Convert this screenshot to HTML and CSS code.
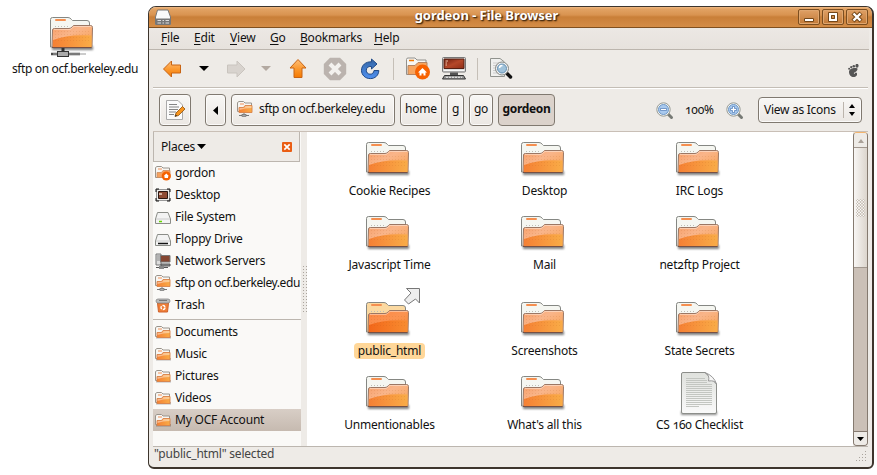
FILE: index.html
```html
<!DOCTYPE html>
<html lang="en">
<head>
<meta charset="utf-8">
<title>gordeon - File Browser</title>
<link rel="stylesheet" href="styles.css">
</head>
<body>
<svg class="defs" width="0" height="0">
  <defs>
    <linearGradient id="front" x1="0" y1="0" x2="1" y2="1"><stop offset="0" stop-color="#f79c64"/><stop offset=".4" stop-color="#f9b58a"/><stop offset="1" stop-color="#f9a04e"/></linearGradient>
    <linearGradient id="frontSel" x1="0" y1="0" x2="1" y2="1"><stop offset="0" stop-color="#fb8643"/><stop offset=".5" stop-color="#fb9351"/><stop offset="1" stop-color="#f88a35"/></linearGradient>
    <linearGradient id="low" x1="0" y1="0" x2="1" y2="0"><stop offset="0" stop-color="#f58034"/><stop offset="1" stop-color="#f9ac47"/></linearGradient>
    <linearGradient id="lowSel" x1="0" y1="0" x2="1" y2="0"><stop offset="0" stop-color="#f2671a"/><stop offset="1" stop-color="#f88c30"/></linearGradient>
    <linearGradient id="orange" x1="0" y1="0" x2="0" y2="1"><stop offset="0" stop-color="#ffbe78"/><stop offset=".5" stop-color="#fb9a32"/><stop offset="1" stop-color="#f57900"/></linearGradient>
    <linearGradient id="blue" x1="0" y1="0" x2="0" y2="1"><stop offset="0" stop-color="#3465a4"/><stop offset="1" stop-color="#4f90f0"/></linearGradient>
    <linearGradient id="screen" x1="0" y1="0" x2="1" y2="1"><stop offset="0" stop-color="#6e1c0e"/><stop offset=".5" stop-color="#b5482a"/><stop offset="1" stop-color="#8f2d16"/></linearGradient>
    <linearGradient id="paper" x1="0" y1="0" x2="0" y2="1"><stop offset="0" stop-color="#dfe1dd"/><stop offset="1" stop-color="#fafafa"/></linearGradient>
    <filter id="soft" x="-20%" y="-100%" width="140%" height="300%"><feGaussianBlur stdDeviation="1.1"/></filter>
    <pattern id="dots" width="3" height="3" patternUnits="userSpaceOnUse"><rect x="1" y="1" width="1" height="1" fill="#a04a10" fill-opacity=".13"/></pattern>
  </defs>
  <symbol id="folder" viewBox="0 0 48 38">
    <rect x="4" y="31" width="41" height="4" fill="#000" opacity=".5" filter="url(#soft)"/>
    <path class="back" d="M2.500 32V4.500Q2.500 2.500 4.500 2.500H20Q22 2.500 23.500 4.500L24.500 5.500H39Q41.500 5.500 41.500 8V32Z" stroke="#858783"/>
    <rect x="7" y="4" width="11" height="2" rx="1" fill="#f58f50"/>
    <path d="M7 11.500H22" stroke="#bdbdb6" stroke-dasharray="1 2"/>
    <path class="front" d="M4.500 15Q4.500 13.500 6.500 13.500H21Q23 13.500 24.500 11.500L25.500 10.500H42.500Q44.500 10.500 44.500 12.500L44 31Q44 32.500 42.500 32.500H5.500Q4 32.500 4 31Z" stroke="#9b7764"/>
    <path class="low" d="M5 25Q20 19 43.500 20.500V32H5Z"/>
    <rect x="7" y="15" width="35" height="13" fill="url(#dots)"/>
    <path d="M5.500 15Q5.500 14.500 7 14.500H22L26 11.500H43.500" fill="none" stroke="#fff" stroke-opacity=".4"/>
    <path d="M4 32.500H43.500" stroke="#775044"/>
  </symbol>
  <symbol id="mini" viewBox="0 0 16 16">
    <rect x="1" y="12" width="15" height="2.500" fill="#000" opacity=".25"/>
    <path d="M.5 12.500V3.500L2 2.500H6.500L8 4H14.500V12.500Z" fill="#f8f6f2" stroke="#9a948c"/>
    <path d="M3 5H7" stroke="#f3925a"/>
    <path d="M2 13.500V8.500H6.500L8 6.500H15V13.500Z" fill="url(#low)" stroke="#d98248" stroke-width=".9"/>
    <path d="M2.500 9H7L8.500 7H14.500V9Q8 9 2.500 11Z" fill="#fff" opacity=".42"/>
  </symbol>
  <symbol id="mininet" viewBox="0 0 16 16">
    <path d="M.5 10.500V1.500L2 .5H6.500L8 2H14.500V10.500Z" fill="#f8f6f2" stroke="#9a948c"/>
    <path d="M3 3H7" stroke="#f3925a"/>
    <path d="M2 11.500V6.500H6.500L8 4.500H15V11.500Z" fill="url(#low)" stroke="#d98248" stroke-width=".9"/>
    <path d="M2.500 7H7L8.500 5H14.500V7Q8 7 2.500 9Z" fill="#fff" opacity=".42"/>
    <path d="M2 14.500H12M7 12V14" stroke="#777"/><rect x="5" y="13.300" width="4" height="2.200" fill="#aaa" stroke="#666" stroke-width=".6"/>
  </symbol>
  <symbol id="home" viewBox="0 0 16 16">
    <path d="M.5 12.500V2.500L2 1.500H6.500L8 3H14.500V12.500Z" fill="#f8f6f2" stroke="#9a948c"/>
    <path d="M3 4H7" stroke="#f3925a"/>
    <path d="M2 12.500V7.500H6.500L8 5.500H15V12.500Z" fill="#f6a25e" stroke="#c98c60" stroke-width=".8"/>
    <circle cx="11.300" cy="11" r="4.600" fill="#f56200"/>
    <path d="M8.600 11.200L11.300 8.500L14 11.200H13V13H9.600V11.200Z" fill="#fff"/>
  </symbol>
  <symbol id="drive" viewBox="0 0 16 16">
    <path d="M2.500 3.500H13L15.500 10V14.500H.5V10Z" fill="#f3f3f3" stroke="#8b8d88"/>
    <path d="M1 10H15" stroke="#ccc"/>
  </symbol>
  <symbol id="close" viewBox="0 0 10 10">
    <rect width="10" height="10" rx="1" fill="#ea5d13"/><path d="M2.300 2.300L7.700 7.700M7.700 2.300L2.300 7.700" stroke="#fff" stroke-width="1.700"/>
  </symbol>
  <symbol id="lens" viewBox="0 0 18 18">
    <path d="M12 12L15.500 15.500" stroke="#777a75" stroke-width="3" stroke-linecap="round"/>
    <circle cx="7.500" cy="7.500" r="6.700" fill="#f3f4f2" stroke="#969a94"/>
    <circle cx="7.500" cy="7.500" r="5" fill="#a9c9ee" stroke="#6e98c8"/>
  </symbol>
</svg>

<main class="desktop">
  <figure class="launcher">
    <svg class="launcher-icon" viewBox="0 0 48 45"><use href="#folder" width="48" height="38"/><path d="M3 39H14M20 39H32" stroke="#4b4b4b" stroke-width="2.500"/><path d="M5 39H14M20 39H32" stroke="#aaa"/><path d="M32 39H38" stroke="#ccc" stroke-width="2"/><path d="M15 33V36" stroke="#333" stroke-width="3"/><rect x="9.500" y="36.500" width="11" height="5" fill="#aaa" stroke="#333"/></svg>
    <figcaption>sftp on ocf.berkeley.edu</figcaption>
  </figure>

  <section class="window">
    <header class="titlebar">
      <svg class="app-icon" width="16" height="16" viewBox="0 0 16 16"><path d="M2.500 1H13L15.500 8V15.500H.5V8Z" fill="#fafafa" stroke="#777"/><path d="M1 9.500H15V15H1Z" fill="#777"/><path d="M2.500 11.500H6M2.500 14H6M7.500 11.500H9M7.500 14H9M10.500 11.500H14M10.500 14H14" stroke="#ddd" stroke-width="1.200"/></svg>
      <h1>gordeon - File Browser</h1>
      <div class="controls">
        <i><svg viewBox="0 0 20 14"><path d="M5.500 8.500H14.500V11.500H5.500Z" fill="#fff" stroke="#744719"/></svg></i>
        <i><svg viewBox="0 0 20 14"><path d="M5.500 2.500H14.500V11.500H5.500Z" fill="none" stroke="#744719"/><path d="M7 4H13V10H7Z" fill="none" stroke="#fff" stroke-width="2"/><path d="M8.500 5.500H11.500V8.500H8.500Z" fill="none" stroke="#744719"/></svg></i>
        <i><svg viewBox="0 0 20 14"><path d="M6 3L14 11M14 3L6 11" stroke="#744719" stroke-width="4.500"/><path d="M6.500 3.500L13.500 10.500M13.500 3.500L6.500 10.500" stroke="#fff" stroke-width="2.400"/></svg></i>
      </div>
    </header>

    <nav class="menu">
      <span class="m1"><u>F</u>ile</span><span class="m2"><u>E</u>dit</span><span class="m3"><u>V</u>iew</span><span class="m4"><u>G</u>o</span><span class="m5"><u>B</u>ookmarks</span><span class="m6"><u>H</u>elp</span>
    </nav>

    <div class="toolbar">
      <svg class="t-back" width="22" height="20" viewBox="0 0 22 20"><path d="M2.500 10L10.500 2V6H19.500V14H10.500V18Z" fill="url(#orange)" stroke="#c86414" stroke-linejoin="round"/></svg>
      <svg class="t-drop" width="10" height="5" viewBox="0 0 10 5"><path d="M0 0H10L5 5Z" fill="#000"/></svg>
      <svg class="t-fwd" width="22" height="20" viewBox="0 0 22 20"><path d="M19 10L11 2V6H1.500V14H11V18Z" fill="#d8d3ce" stroke="#c9c4be" stroke-linejoin="round"/></svg>
      <svg class="t-drop2" width="10" height="5" viewBox="0 0 10 5"><path d="M0 0H10L5 5Z" fill="#b3a9a1"/></svg>
      <svg class="t-up" width="20" height="22" viewBox="0 0 20 22"><path d="M10 1.500L18 10H14V19.500H6V10H2Z" fill="url(#orange)" stroke="#c86414" stroke-linejoin="round"/></svg>
      <svg class="t-stop" width="24" height="24" viewBox="0 0 24 24"><path d="M7 .8H17L23.200 7V17L17 23.200H7L.8 17V7Z" fill="#bbb3ae"/><path d="M7 7L17 17M17 7L7 17" stroke="#f3f1ee" stroke-width="4"/></svg>
      <svg class="t-reload" width="20" height="22" viewBox="0 0 20 22"><path d="M11.500 1L17 6L11.500 11V8.500C8 8 6.300 10 6.300 12.300C6.300 14.600 8 16.200 10 16.200C12.500 16.200 13.800 14.700 14 12.500H18.800C18.700 17.500 15 20.600 10.300 20.600C5.200 20.600 1.500 17 1.500 12.300C1.500 7.300 5.500 3.600 11.500 3.800Z" fill="url(#blue)" stroke="#204a87" stroke-linejoin="round"/></svg>
      <b class="sep s1"></b>
      <svg class="t-home" width="24" height="23" viewBox="0 0 24 23"><path d="M.5 17.500V2.500Q.5 1 2 1H9L11 3H20V17.500Z" fill="#f7f7f4" stroke="#92908c"/><path d="M3 3.500H8" stroke="#f57900" stroke-width="1.500"/><path d="M2 17.500V8.500H9L12 5.500H21V17.500Z" fill="#f6a45f" stroke="#b38463"/><circle cx="16.500" cy="15" r="7.500" fill="#f76100"/><path d="M12 15.500L16.500 11L21 15.500H19.500V18.500H17.500V16.500H15.500V18.500H13.500V15.500Z" fill="#fff"/></svg>
      <svg class="t-pc" width="24" height="23" viewBox="0 0 24 23"><rect x=".5" y=".5" width="23" height="14.500" rx="1" fill="#ddd" stroke="#777"/><path d="M2 2H22V11.500H2Z" fill="url(#screen)" stroke="#552013"/><path d="M3.500 4H6M3.500 6H5M3.500 8H5" stroke="#efc4a9"/><path d="M2 13.500H22" stroke="#f8f8f8"/><path d="M8 15.500H16V18H8Z" fill="#555"/><path d="M2.500 18.500H21.500L23.500 22H.5Z" fill="#999" stroke="#333"/><path d="M4 20.300H20" stroke="#eee" stroke-dasharray="2 1"/></svg>
      <b class="sep s2"></b>
      <svg class="t-find" width="24" height="23" viewBox="0 0 24 23"><path d="M.5 1.500H10L14.500 5V19.500H.5Z" fill="#f0f0ee" stroke="#90928d"/><path d="M3 6H9M3 8.500H7M3 11H6M3 13.500H6M3 16H9" stroke="#ccc"/><path d="M17 16.500L20.500 20" stroke="#111" stroke-width="3.500" stroke-linecap="round"/><circle cx="12" cy="11.500" r="6.500" fill="#f1f1f1" stroke="#858884"/><circle cx="12" cy="11.500" r="4.500" fill="#a0c2da" stroke="#6590b2"/><path d="M9.500 11Q9.500 8.500 12.500 8.500" fill="none" stroke="#fff" stroke-width="1.500"/></svg>
      <svg class="t-gnome" width="11" height="13" viewBox="0 0 11 13"><g fill="#555"><path d="M9.500 4.500C6.500 3.500 1 4.300 1 8C1 11 3.300 13 5.500 13C8.200 13 9.800 11 8.800 9C8.200 8 7 8.500 7 9.300C6.700 10.200 5.600 10 6 9C6.500 8 9.800 7.500 9.500 4.500Z"/><ellipse cx="9" cy="1.800" rx="1.600" ry="2"/><circle cx="5.800" cy="2.200" r="1.300"/><circle cx="3.200" cy="3.200" r="1.100"/><circle cx="1.100" cy="4.700" r="1"/></g></svg>
    </div>

    <div class="location">
      <div class="btn b-edit"><svg width="20" height="22" viewBox="0 0 20 22"><path d="M1.500 1.500H13L17.500 6V20.500H1.500Z" fill="#fbfbfb" stroke="#aaa"/><path d="M4 5.500H12M4 8H14M4 10.500H13M4 13H11M4 15.500H9" stroke="#858585"/><path d="M10 17.500L11 14L17.500 7.500L20 10L13.500 16.500Z" fill="#f7941d" stroke="#8c5210" stroke-width=".8"/><path d="M10 17.500L10.600 15.400L12.200 16.800Z" fill="#333"/></svg></div>
      <div class="btn b-prev"><svg width="5" height="9" viewBox="0 0 5 9"><path d="M5 0V9L0 4.500Z"/></svg></div>
      <div class="btn b-sftp"><svg width="16" height="16"><use href="#mininet"/></svg><span>sftp on ocf.berkeley.edu</span></div>
      <div class="btn b-home">home</div>
      <div class="btn b-g">g</div>
      <div class="btn b-go">go</div>
      <div class="btn b-cur">gordeon</div>
      <div class="zoom">
        <svg width="18" height="18" viewBox="0 0 18 18"><use href="#lens"/><path d="M4.500 6.500H10.500V8.500H4.500Z" fill="#fff" stroke="#4c79b4" stroke-width=".7"/></svg>
        <span>100%</span>
        <svg width="18" height="18" viewBox="0 0 18 18"><use href="#lens"/><path d="M6.500 4.500H8.500V6.500H10.500V8.500H8.500V10.500H6.500V8.500H4.500V6.500H6.500Z" fill="#fff" stroke="#4c79b4" stroke-width=".7"/></svg>
      </div>
      <div class="btn view"><span>View as Icons</span><svg width="6" height="12" viewBox="0 0 6 12"><path d="M3 0L6 4H0ZM3 12L0 8H6Z"/></svg></div>
    </div>

    <div class="body">
      <aside class="side">
        <div class="side-head"><span>Places</span><svg width="9" height="5" viewBox="0 0 9 5"><path d="M0 0H9L4.500 5Z"/></svg><svg class="x" width="10" height="10"><use href="#close"/></svg></div>
        <ul>
          <li><svg><use href="#home"/></svg>gordon</li>
          <li><svg viewBox="0 0 16 16"><path d="M1.500 2.500H14.500V13.500H1.500Z" fill="#eee" stroke="#999"/><path d="M1 5V2H4M12 2H15V5M15 11V14H12M4 14H1V11" fill="none" stroke="#111"/><path d="M3.500 4.500H12.500V11.500H3.500Z" fill="#8f4b34" stroke="#2c1712"/><path d="M4 6H7V8H4Z" fill="#d5b3a2"/></svg>Desktop</li>
          <li><svg viewBox="0 0 16 16"><use href="#drive"/><path d="M4 12.500H7" stroke="#65d800" stroke-width="1.500"/></svg>File System</li>
          <li><svg viewBox="0 0 16 16"><use href="#drive"/><path d="M3 12.500H13" stroke="#111" stroke-width="1.500"/></svg>Floppy Drive</li>
          <li><svg viewBox="0 0 16 16"><path d="M1 1H6V12H1Z" fill="#ddd" stroke="#777"/><path d="M2 3H5M2 5H5M2 7H5" stroke="#888"/><path d="M5.500 2.500H15V9H5.500Z" fill="#854631" stroke="#777"/><path d="M6 11H15V13H6Z" fill="#999" stroke="#555"/><path d="M1 14.500H13" stroke="#555"/><path d="M4 13H9V16H4Z" fill="#888"/></svg>Network Servers</li>
          <li class="tight"><svg><use href="#mininet"/></svg>sftp on ocf.berkeley.edu</li>
          <li><svg viewBox="0 0 16 16"><path d="M2.500 6H13.500L12.500 15H3.500Z" fill="#ef7e37" stroke="#d0622c"/><rect x="1" y="2" width="14" height="4" rx="2" fill="#bbb" stroke="#888" stroke-width=".8"/><path d="M4 3.500H12" stroke="#777"/><circle cx="8" cy="10.500" r="2" fill="none" stroke="#fff" stroke-width="1.300" stroke-dasharray="3 1"/></svg>Trash</li>
        </ul>
        <hr>
        <ul>
          <li><svg><use href="#mini"/></svg>Documents</li>
          <li><svg><use href="#mini"/></svg>Music</li>
          <li><svg><use href="#mini"/></svg>Pictures</li>
          <li><svg><use href="#mini"/></svg>Videos</li>
          <li class="on"><svg><use href="#mini"/></svg>My OCF Account</li>
        </ul>
      </aside>
      <div class="grip"><i></i></div>
      <div class="files">
        <div class="file"><svg><use href="#folder"/></svg><span>Cookie Recipes</span></div>
        <div class="file"><svg><use href="#folder"/></svg><span>Desktop</span></div>
        <div class="file"><svg><use href="#folder"/></svg><span>IRC Logs</span></div>
        <div class="file"><svg><use href="#folder"/></svg><span>Javascript Time</span></div>
        <div class="file"><svg><use href="#folder"/></svg><span>Mail</span></div>
        <div class="file"><svg><use href="#folder"/></svg><span>net2ftp Project</span></div>
        <div class="file sel"><svg><use href="#folder"/></svg><span>public_html</span><svg class="emblem" viewBox="0 0 18 18"><path d="M3.500 1.500H16.500V16L12.500 12L5.500 17L1.500 13L8 6Z" fill="#eee" stroke="#777"/></svg></div>
        <div class="file"><svg><use href="#folder"/></svg><span>Screenshots</span></div>
        <div class="file"><svg><use href="#folder"/></svg><span>State Secrets</span></div>
        <div class="file"><svg><use href="#folder"/></svg><span>Unmentionables</span></div>
        <div class="file"><svg><use href="#folder"/></svg><span>What's all this</span></div>
        <div class="file doc"><svg viewBox="0 0 40 46"><rect x="2" y="40" width="36" height="4" fill="#000" opacity=".45" filter="url(#soft)"/><path d="M4 1.500H26L37.500 13V41Q37.500 42.500 36 42.500H4Q2.500 42.500 2.500 41V3Q2.500 1.500 4 1.500Z" fill="url(#paper)" stroke="#8c8e8a"/><path d="M7 7.500H26M7 9.500H28M7 11.500H28M7 13.500H33M7 15.500H33M7 17.500H33M7 19.500H33M7 21.500H33M7 23.500H33M7 25.500H33M7 27.500H33M7 29.500H33M7 31.500H33M7 33.500H33M7 35.500H20" stroke="#c3c6c1"/><path d="M26 1.500Q31 4 29.500 10Q36 9 37.500 13Q35 5 26 1.500Z" fill="#f7f7f7" stroke="#999"/></svg><span>CS 160 Checklist</span></div>
      </div>
      <div class="scroll">
        <div class="sb up"><svg width="6" height="4" viewBox="0 0 6 4"><path d="M3 0L6 4H0Z" fill="#aaa198"/></svg></div>
        <div class="thumb"><i></i></div>
        <div class="trough"></div>
        <div class="sb"><svg width="7" height="4" viewBox="0 0 7 4"><path d="M0 0H7L3.500 4Z"/></svg></div>
      </div>
    </div>
    <footer class="status"><span>"public_html" selected</span><svg width="11" height="11" viewBox="0 0 11 11"><path d="M9.500 0V11M6.500 3V11M3.500 6V11M.5 9V11" stroke="#aaa49d" stroke-dasharray="1 2"/></svg></footer>
  </section>
</main>
</body>
</html>
```
FILE: styles.css
```css
* { box-sizing: border-box; }
body { margin: 0; background: #fff; color: #111; font: 12px/16px "Noto Sans", sans-serif; font-variant-numeric: oldstyle-nums; letter-spacing: -0.2px; overflow: hidden; }
.defs { position: absolute; }
svg { display: block; flex: none; }
.desktop { display: flex; width: 877px; height: 475px; }
.launcher { margin: 15px 0 0; width: 148px; display: flex; flex-direction: column; align-items: center; flex: none; white-space: nowrap; }
.launcher-icon { width: 48px; height: 45px; margin: 0 0 1px -4px; }
.launcher figcaption { padding-left: 2px; letter-spacing: -0.37px; }
.window { margin-top: 6px; width: 726px; height: 463px; border: 1px solid #3d352d; border-bottom-width: 2px; border-right-width: 2px; border-radius: 8px 8px 6px 6px; background: #eeebe7; overflow: hidden; display: flex; flex-direction: column; flex: none; }
.titlebar { height: 21px; flex: none; display: flex; align-items: center; background: linear-gradient(#efb983 0, #e2a263 2px, #d99350 8px, #c97f38 10px, #d48d47 20px); border-bottom: 1px solid #80501f; padding: 0 4px 0 6px; }
.titlebar h1 { flex: 1; margin: 0 0 3px 4px; text-align: center; font-size: 13px; line-height: 17px; letter-spacing: -0.05px; color: #fff; text-shadow: 1px 1px 1px #4a2d10, 1px 1px 2px #4a2d10; }
.controls { display: flex; gap: 2px; }
.controls i { width: 22px; height: 16px; border: 1px solid #7c4e20; border-radius: 2px; background: linear-gradient(#dfa066, #c27a37); box-shadow: inset 0 0 0 1px #dfa66f; }
.controls svg { width: 20px; height: 14px; }
.menu { height: 22px; flex: none; display: flex; align-items: center; padding: 0 0 2px 12px; margin: 0 3px 0 0; background: linear-gradient(#ece8e4, #e7e2dd); border-bottom: 1px solid #bcb5ad; }
.menu u { text-underline-offset: 2px; }
.m1 { width: 33px; } .m2 { width: 36px; } .m3 { width: 40px; } .m4 { width: 30px; } .m5 { width: 74px; }
.toolbar { height: 38px; flex: none; display: flex; align-items: center; margin: 0 4px; border-bottom: 1px solid #c3bdb5; box-shadow: 0 1px #fff; padding: 0 9px 0 8px; }
.t-drop { margin-left: 16px; } .t-fwd { margin-left: 17px; } .t-drop2 { margin-left: 13px; } .t-up { margin-left: 17px; } .t-stop { margin-left: 15px; } .t-reload { margin-left: 13px; }
.sep { width: 1px; height: 22px; background: #c5bfb7; flex: none; }
.s1 { margin-left: 13px; } .t-home { margin-left: 12px; } .t-pc { margin-left: 12px; } .s2 { margin-left: 11px; } .t-find { margin-left: 12px; }
.t-gnome { margin: 3px 0 0 auto; }
.location { height: 43px; flex: none; display: flex; align-items: center; padding: 1px 10px 0; }
.btn { height: 32px; border: 1px solid #807970; border-radius: 4px; background: linear-gradient(#f8f7f5, #ebe7e3); display: flex; align-items: center; justify-content: center; flex: none; white-space: nowrap; padding-bottom: 2px; box-shadow: inset 0 0 0 1px #fbfaf9; }
.b-edit { width: 32px; padding: 0; }
.b-prev { width: 21px; margin-left: 14px; padding: 0; }
.b-sftp { width: 164px; margin-left: 5px; gap: 6px; justify-content: flex-start; padding-left: 5px; letter-spacing: -0.37px; }
.b-home { width: 42px; margin-left: 5px; }
.b-g { width: 17px; margin-left: 5px; }
.b-go { width: 24px; margin-left: 5px; }
.b-cur { width: 57px; margin-left: 5px; background: #dbd2cb; font-weight: bold; letter-spacing: -0.3px; box-shadow: none; }
.zoom { margin-left: auto; display: flex; align-items: center; gap: 11px; padding-top: 1px; }
.zoom span { width: 30px; white-space: nowrap; margin-top: -2px; }
.view { width: 104px; height: 26px; margin-left: 14px; justify-content: space-between; padding: 0 6px 1px 5px; }
.view span { border-right: 1px solid #bbb4ac; padding-right: 7px; letter-spacing: -0.27px; }
.body { height: 316px; flex: none; display: flex; margin: 0 4px; border-top: 1px solid #c9bfb6; border-bottom: 1px solid #bcb6af; }
.side { width: 148px; background: #faf9f7; overflow: hidden; flex: none; white-space: nowrap; }
.side-head { height: 30px; margin-right: 1px; border: 1px solid #bcb6af; border-top: 0; background: #eeebe7; display: flex; align-items: center; padding: 0 7px; gap: 2px; }
.side-head .x { margin-left: auto; }
.side ul { margin: 0; padding: 0; list-style: none; }
.side li { height: 22px; display: flex; align-items: center; gap: 4px; padding-left: 2px; }
.side li svg { width: 16px; height: 16px; }
.side .tight { letter-spacing: -0.42px; }
.side hr { height: 1px; border: 0; background: #bcb6af; margin: 3px 0 1px; }
.side .on { background: linear-gradient(#d8cec6, #c6bab0); }
.grip { width: 6px; display: flex; align-items: center; justify-content: center; flex: none; }
.grip i { width: 5px; height: 48px; background: radial-gradient(#aaa49d 0.6px, transparent 0.9px) 0 0 / 3px 3px; }
.files { flex: 1; background: #fff; display: grid; grid-template-columns: 155px 155px 155px; grid-template-rows: 73px 74px 86px 74px; padding: 0 0 0 5px; }
.file { display: flex; flex-direction: column; align-items: center; justify-content: flex-end; padding-bottom: 6px; position: relative; }
.file > svg { width: 48px; height: 38px; margin: 0 4px 5px 0; }
.file span { padding: 0 4px; border-radius: 4px; white-space: nowrap; }
.doc > svg { width: 40px; height: 46px; margin: 0 2px 0 0; }
.sel span { background: #ffd799; }
.back { fill: var(--back, #f5f6f1); }
.front { fill: var(--front, url(#front)); }
.low { fill: var(--low, url(#low)); }
.sel { --back: #fbd9a1; --front: url(#frontSel); --low: url(#lowSel); }
.file > .emblem { position: absolute; width: 18px; height: 18px; left: 91px; top: 8px; margin: 0; }
.scroll { width: 15px; flex: none; display: flex; flex-direction: column; border: 1px solid #857a70; border-top-color: #f4b46d; border-radius: 4px; overflow: hidden; background: #cbc0b7; }
.sb { height: 14px; display: flex; align-items: center; justify-content: center; background: #eeebe7; border-top: 1px solid #857a70; flex: none; }
.sb.up { border-top-color: #eeebe7; }
.thumb { height: 121px; border: solid #a1978e; border-width: 1px 0; background: linear-gradient(90deg, #f8f6f4, #dcd5cd); display: flex; align-items: center; justify-content: center; }
.thumb i { width: 9px; height: 18px; background: radial-gradient(#fff 0.7px, #bbb1a7 1.1px, transparent 1.3px) 0 0 / 3px 3px; }
.trough { flex: 1; }
.status { flex: 1; display: flex; justify-content: space-between; padding: 0 5px; color: #444; margin-top: -1px; }
.status svg { margin-top: 5px; }
```
